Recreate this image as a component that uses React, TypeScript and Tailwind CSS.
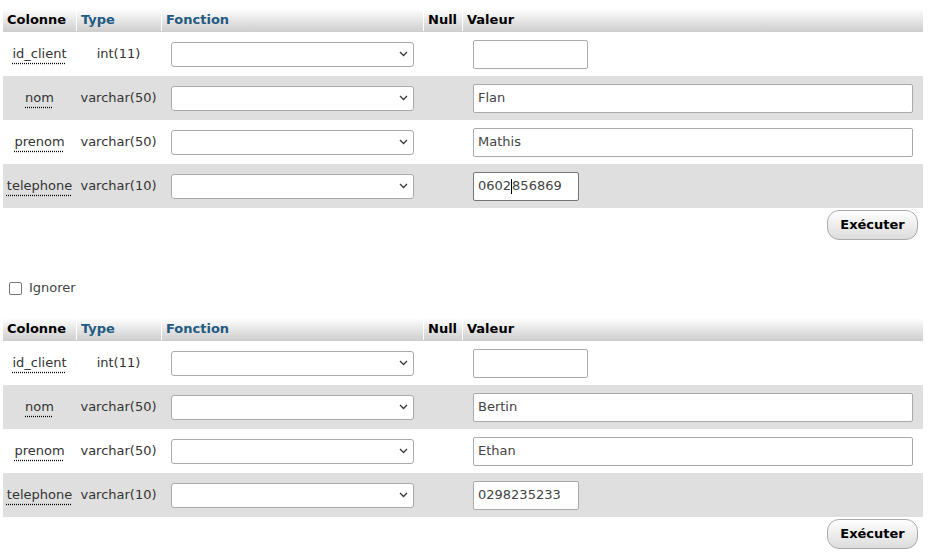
import React from "react";

type Row = { name: string; type: string; value: string; w: string; focus?: boolean };

const table1: Row[] = [
  { name: "id_client", type: "int(11)", value: "", w: "w-[115px]" },
  { name: "nom", type: "varchar(50)", value: "Flan", w: "w-[440px]" },
  { name: "prenom", type: "varchar(50)", value: "Mathis", w: "w-[440px]" },
  { name: "telephone", type: "varchar(10)", value: "0602856869", w: "w-[106px]", focus: true },
];

const table2: Row[] = [
  { name: "id_client", type: "int(11)", value: "", w: "w-[115px]" },
  { name: "nom", type: "varchar(50)", value: "Bertin", w: "w-[440px]" },
  { name: "prenom", type: "varchar(50)", value: "Ethan", w: "w-[440px]" },
  { name: "telephone", type: "varchar(10)", value: "0298235233", w: "w-[106px]" },
];

const grid = "grid grid-cols-[73px_85px_262px_39px_461px]";

function Header() {
  return (
    <div className={`${grid} h-[23px] pb-[1px] bg-linear-to-b from-white to-[#cdcdcd] font-bold`}>
      <div className="pl-[4px] flex items-center text-black">Colonne</div>
      <div className="pl-[4px] flex items-center border-l border-white text-[#235a81]">Type</div>
      <div className="pl-[4px] flex items-center border-l border-white text-[#235a81]">Fonction</div>
      <div className="pl-[4px] flex items-center border-l border-white text-black">Null</div>
      <div className="pl-[4px] flex items-center border-l border-white text-black">Valeur</div>
    </div>
  );
}

function Select() {
  return (
    <div className="ml-[10px] w-[243px] h-[25px] border border-[#aaa] rounded-[3px] bg-white flex items-center justify-end pr-[5px]">
      <svg width="9" height="6" viewBox="0 0 9 6">
        <polyline points="1,1 4.5,4.5 8,1" fill="none" stroke="#3a3a3a" strokeWidth="1.3" />
      </svg>
    </div>
  );
}

function FormTable({ rows }: { rows: Row[] }) {
  return (
    <div className="w-[920px]">
      <Header />
      {rows.map((r, i) => (
        <div key={r.name} className={`${grid} h-[44px] ${i % 2 === 1 ? "bg-[#dfdfdf]" : "bg-white"}`}>
          <div className="flex items-center justify-center text-[#333]">
            <span className="underline decoration-dotted decoration-black underline-offset-[5px]">{r.name}</span>
          </div>
          <div className="flex items-center justify-center text-[#333]">{r.type}</div>
          <div className="flex items-center">
            <Select />
          </div>
          <div />
          <div className="flex items-center">
            <div
              className={`ml-[11px] ${r.w} h-[29px] bg-white border ${r.focus ? "border-[#767676]" : "border-[#aaa]"} rounded-[2px] flex items-center pl-[4px] text-[#444] whitespace-nowrap`}
            >
              {r.focus ? (
                <>
                  {r.value.slice(0, 4)}
                  <span className="inline-block w-px h-[15px] bg-black" />
                  {r.value.slice(4)}
                </>
              ) : (
                r.value
              )}
            </div>
          </div>
        </div>
      ))}
      <div className="flex justify-end pr-[5px] mt-[2px]">
        <button className="h-[30px] w-[91px] rounded-[12px] border border-[#aaa] bg-linear-to-b from-white to-[#dcdcdc] font-bold text-black text-[13px]">
          Exécuter
        </button>
      </div>
    </div>
  );
}

export default function App() {
  return (
    <div className="bg-white min-h-[558px] w-[942px] pt-[9px] pl-[3px] font-['DejaVu_Sans',sans-serif] text-[13px] text-black">
      <FormTable rows={table1} />
      <div className="mt-[40px] mb-[22px] h-[16px] flex items-center">
        <span className="ml-[6px] mr-[7px] w-[13px] h-[13px] border-[1.5px] border-[#7b7787] rounded-[2px] bg-white" />
        <span className="text-[#444]">Ignorer</span>
      </div>
      <FormTable rows={table2} />
    </div>
  );
}
